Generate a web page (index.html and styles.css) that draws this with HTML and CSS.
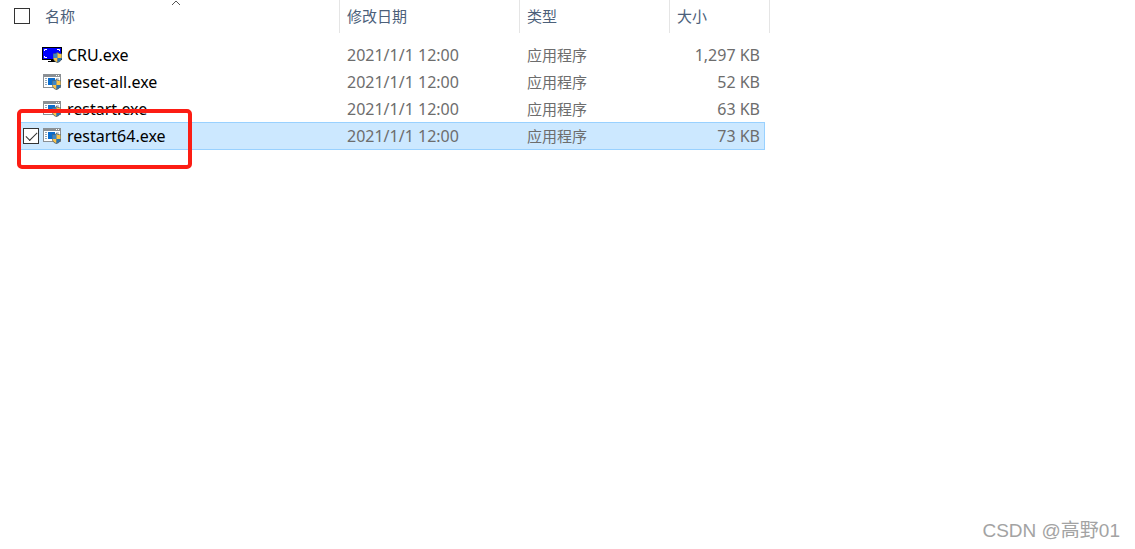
FILE: index.html
```html
<!DOCTYPE html>
<html lang="zh-CN">
<head>
    <meta charset="UTF-8">
    <meta name="viewport" content="width=device-width, initial-scale=1.0">
    <title>CRU</title>
    <link rel="stylesheet" href="styles.css">
</head>
<body>
    <svg class="symbols" aria-hidden="true">
        <symbol id="shield" viewBox="0 0 9 11">
            <path d="M4.500 0C3 1 2 1.500 0 1.500V6c0 2.500 2 4 4.500 5C7 10 9 8.500 9 6V1.500C7 1.500 6 1 4.500 0z" fill="#55646f"/>
            <path d="M4.500 1C3.200 2 2 2 .5 2.200V6h4z" fill="#3f86c4"/>
            <path d="M4.500 1C5.800 2 7 2 8.500 2.200V6h-4z" fill="#fbc54a"/>
            <path d="M.5 6c.2 2 1.700 3.300 4 4.200V6z" fill="#fbc54a"/>
            <path d="M8.500 6c-.2 2-1.700 3.300-4 4.200V6z" fill="#2a74b5"/>
        </symbol>
        <symbol id="app" viewBox="0 0 20 18">
            <path d="M1 1h18v14H1z" fill="#8b9094"/>
            <path d="M2 4h16v10H2z" fill="#fff"/>
            <path d="M14 2h1v1h-1zM16 2h1v1h-1z" fill="#fff"/>
            <path d="M3 5h2v1H3zM3 7h2v1H3zM3 9h2v1H3zM3 11h2v1H3z" fill="#8fa5b8"/>
            <path d="M14 5h3v5h-3z" fill="#c3ced8"/>
            <path d="M6 5h7v7H6z" fill="#0a6cce"/>
            <use href="#shield" x="10" y="6" width="9" height="11"/>
        </symbol>
        <symbol id="monitor" viewBox="0 0 20 18">
            <path d="M0 1h20v13H0z"/>
            <path d="M1 2h18v11H1z" fill="#00f"/>
            <path d="M9 14h3v1H9zM6 15h8v1H6z"/>
            <path d="M2.500 5V3.500H5M15 3.500h2.500V5M2.500 10v1.500H5" fill="none" stroke="#fff"/>
            <use href="#shield" x="11" y="6" width="9" height="11"/>
        </symbol>
    </svg>

    <main class="explorer">
        <table class="files">
            <colgroup>
                <col class="col-gutter">
                <col class="col-name">
                <col class="col-date">
                <col class="col-type">
                <col class="col-size">
                <col class="col-tail">
            </colgroup>
            <thead>
                <tr>
                    <th colspan="2" aria-sort="ascending">
                        <div class="name-head">
                            <input type="checkbox" class="check" aria-label="全选">
                            <span>名称</span>
                            <svg class="sort" viewBox="0 0 10 6"><path d="M1 5l4-4 4 4" fill="none" stroke="#555"/></svg>
                        </div>
                    </th>
                    <th>修改日期</th>
                    <th>类型</th>
                    <th colspan="2">大小</th>
                </tr>
            </thead>
            <tbody>
                <tr>
                    <td></td>
                    <td>
                        <label class="file">
                            <input type="checkbox" class="check">
                            <svg class="icon"><use href="#monitor"/></svg>
                            <span>CRU.exe</span>
                        </label>
                    </td>
                    <td class="date">2021/1/1 12:00</td>
                    <td>应用程序</td>
                    <td class="size">1,297 KB</td>
                    <td></td>
                </tr>
                <tr>
                    <td></td>
                    <td>
                        <label class="file">
                            <input type="checkbox" class="check">
                            <svg class="icon"><use href="#app"/></svg>
                            <span>reset-all.exe</span>
                        </label>
                    </td>
                    <td class="date">2021/1/1 12:00</td>
                    <td>应用程序</td>
                    <td class="size">52 KB</td>
                    <td></td>
                </tr>
                <tr>
                    <td></td>
                    <td>
                        <label class="file">
                            <input type="checkbox" class="check">
                            <svg class="icon"><use href="#app"/></svg>
                            <span>restart.exe</span>
                        </label>
                    </td>
                    <td class="date">2021/1/1 12:00</td>
                    <td>应用程序</td>
                    <td class="size">63 KB</td>
                    <td></td>
                </tr>
                <tr class="selected">
                    <td></td>
                    <td>
                        <label class="file">
                            <input type="checkbox" class="check" checked>
                            <svg class="icon"><use href="#app"/></svg>
                            <span>restart64.exe</span>
                        </label>
                    </td>
                    <td class="date">2021/1/1 12:00</td>
                    <td>应用程序</td>
                    <td class="size">73 KB</td>
                    <td></td>
                </tr>
            </tbody>
        </table>
        <div class="highlight"></div>
    </main>

    <footer class="watermark">CSDN @高野01</footer>
</body>
</html>
```

FILE: styles.css
```css
* {
    box-sizing: border-box;
}
body {
    margin: 0;
    min-height: 100vh;
    display: flex;
    flex-direction: column;
    justify-content: space-between;
    background-color: #fff;
    color: #6d6d6d;
    font-family: "Noto Sans", "Noto Sans CJK SC", sans-serif;
    font-size: 15px;
    line-height: 20px;
}
.symbols {
    position: absolute;
    width: 0;
    height: 0;
}
.explorer {
    position: relative;
}

/* file list */
.files {
    table-layout: fixed;
    width: 770px;
    border-spacing: 0;
}
.col-gutter {
    width: 18px;
}
.col-name {
    width: 322px;
}
.col-date {
    width: 180px;
}
.col-type {
    width: 150px;
}
.col-size {
    width: 95px;
}
.col-tail {
    width: 5px;
}
th {
    height: 33px;
    padding: 0 7px 2px;
    border-right: 1px solid #e5e5e5;
    color: #4c607a;
    font-weight: normal;
    text-align: left;
}
th:first-child {
    padding: 0 0 1px 14px;
}
tbody::before {
    content: "";
    display: block;
    height: 8px;
}
td {
    height: 27px;
    padding: 0 7px;
    white-space: nowrap;
}
td:first-child,
td:last-child {
    padding: 0;
}
td:nth-child(2) {
    padding: 0 0 0 5px;
}
.file,
.date,
.size {
    font-size: 16px;
}
.size {
    padding-right: 5px;
    text-align: right;
}
.name-head {
    position: relative;
    display: flex;
    align-items: center;
    gap: 15px;
}
.sort {
    position: absolute;
    top: -6px;
    left: 157px;
    width: 10px;
    height: 6px;
}
.file {
    display: flex;
    align-items: center;
    color: #000;
}
.icon {
    width: 20px;
    height: 18px;
    margin: 0 5px 0 3px;
}

/* row checkboxes only show up on the selected row */
.check {
    appearance: none;
    flex: none;
    width: 16px;
    height: 16px;
    margin: 0;
    border: 1px solid #333;
    background-color: #fff;
}
td .check {
    opacity: 0;
}
.selected .check {
    display: grid;
    place-items: center;
    opacity: 1;
}
.selected .check::before {
    content: "";
    width: 10px;
    height: 5px;
    border: solid #333;
    border-width: 0 0 1px 1px;
    transform: translateY(-1px) rotate(-45deg);
}
.selected td:not(:first-child):not(:last-child) {
    height: 28px;
    border: solid #99d1ff;
    border-width: 1px 0;
    background-color: #cce8ff;
}
.selected .size {
    box-shadow: inset -1px 0 #99d1ff;
}

.highlight {
    position: absolute;
    top: 109px;
    left: 17px;
    width: 175px;
    height: 60px;
    border: 4px solid #fc1d14;
    border-radius: 5px;
    pointer-events: none;
}
.watermark {
    padding: 0 15px 5px 0;
    color: #a3a3a3;
    font-family: "Liberation Sans", "Noto Sans CJK SC", sans-serif;
    font-size: 19px;
    line-height: 26px;
    text-align: right;
}
```
